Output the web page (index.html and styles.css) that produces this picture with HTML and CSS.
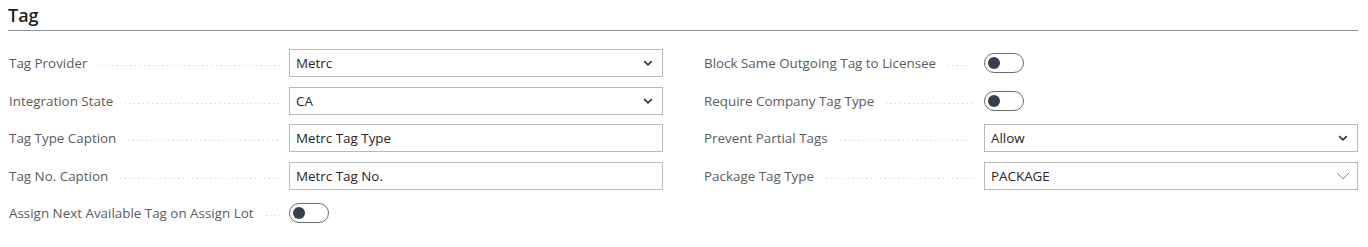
FILE: index.html
```html
<!DOCTYPE html>
<html lang="en">
<head>
<meta charset="utf-8">
<title>Tag</title>
<link rel="stylesheet" href="styles.css">
</head>
<body>
<section class="group">
  <h2 class="group-title">Tag</h2>
  <div class="columns">
    <div class="column">
      <div class="row">
        <div class="label"><span class="label-text">Tag Provider</span><span class="leader"></span></div>
        <div class="field select"><span class="value">Metrc</span>
          <svg class="chev" width="10" height="6" viewBox="0 0 10 6"><path d="M1.2 1.2l3.8 3.6 3.8-3.6" fill="none" stroke="#333" stroke-width="1.7"/></svg></div>
      </div>
      <div class="row">
        <div class="label"><span class="label-text">Integration State</span><span class="leader"></span></div>
        <div class="field select"><span class="value">CA</span>
          <svg class="chev" width="10" height="6" viewBox="0 0 10 6"><path d="M1.2 1.2l3.8 3.6 3.8-3.6" fill="none" stroke="#333" stroke-width="1.7"/></svg></div>
      </div>
      <div class="row">
        <div class="label"><span class="label-text">Tag Type Caption</span><span class="leader"></span></div>
        <div class="field"><span class="value">Metrc Tag Type</span></div>
      </div>
      <div class="row">
        <div class="label"><span class="label-text">Tag No. Caption</span><span class="leader"></span></div>
        <div class="field"><span class="value">Metrc Tag No.</span></div>
      </div>
      <div class="row">
        <div class="label"><span class="label-text">Assign Next Available Tag on Assign Lot</span><span class="leader"></span></div>
        <div class="toggle-cell"><span class="toggle"><span class="knob"></span></span></div>
      </div>
    </div>
    <div class="column">
      <div class="row">
        <div class="label"><span class="label-text">Block Same Outgoing Tag to Licensee</span><span class="leader"></span></div>
        <div class="toggle-cell"><span class="toggle"><span class="knob"></span></span></div>
      </div>
      <div class="row">
        <div class="label"><span class="label-text">Require Company Tag Type</span><span class="leader"></span></div>
        <div class="toggle-cell"><span class="toggle"><span class="knob"></span></span></div>
      </div>
      <div class="row">
        <div class="label"><span class="label-text">Prevent Partial Tags</span><span class="leader"></span></div>
        <div class="field select"><span class="value">Allow</span>
          <svg class="chev" width="10" height="6" viewBox="0 0 10 6"><path d="M1.2 1.2l3.8 3.6 3.8-3.6" fill="none" stroke="#333" stroke-width="1.7"/></svg></div>
      </div>
      <div class="row">
        <div class="label"><span class="label-text">Package Tag Type</span><span class="leader"></span></div>
        <div class="field select"><span class="value">PACKAGE</span>
          <svg class="chev chev-light" width="14" height="8" viewBox="0 0 14 8"><path d="M1 1l6 6 6-6" fill="none" stroke="#8a8a8a" stroke-width="1"/></svg></div>
      </div>
    </div>
  </div>
</section>
</body>
</html>
```

FILE: styles.css
```css
html, body {
  margin: 0;
  padding: 0;
  background: #ffffff;
}

body {
  font-family: "Open Sans", "Noto Sans", sans-serif;
  font-size: 13.4px;
  color: #212121;
}

.group {
  padding: 0 10px 0 8px;
}

.group-title {
  margin: 0;
  padding-top: 2px;
  height: 28px;
  line-height: 26px;
  font-size: 18px;
  font-weight: 600;
  color: #1f1f1f;
  border-bottom: 1px solid #8e949c;
}

.columns {
  display: grid;
  grid-template-columns: 655px 655px;
  column-gap: 40px;
  margin-top: 18px;
}

.column {
  display: flex;
  flex-direction: column;
  gap: 9.5px;
}

.row {
  display: flex;
  height: 28px;
  align-items: center;
}

.label {
  width: 281px;
  flex: none;
  display: flex;
  align-items: center;
  color: #5c5c5c;
}

.label-text {
  white-space: nowrap;
  padding-left: 1px;
}

.leader {
  flex: 1;
  height: 1px;
  margin: 5px 9px 0 12px;
  background-image: linear-gradient(to right, #c8c8c8 1px, transparent 1px);
  background-size: 4.5px 1px;
  background-repeat: repeat-x;
}

.field {
  width: 374px;
  height: 28px;
  box-sizing: border-box;
  border: 1px solid #bababa;
  display: flex;
  align-items: center;
  padding: 0 9px 0 6px;
  color: #262626;
}

.value {
  flex: 1;
  white-space: nowrap;
}

.chev {
  flex: none;
}

.chev-light {
  margin-right: -2px;
}

.toggle-cell {
  width: 374px;
  height: 28px;
  display: flex;
  align-items: center;
}

.toggle {
  width: 40px;
  height: 20px;
  box-sizing: border-box;
  border: 1px solid #6b6b6b;
  border-radius: 10px;
  display: flex;
  align-items: center;
  padding-left: 3px;
}

.knob {
  width: 12px;
  height: 12px;
  border-radius: 50%;
  background: #353f4d;
}
```
